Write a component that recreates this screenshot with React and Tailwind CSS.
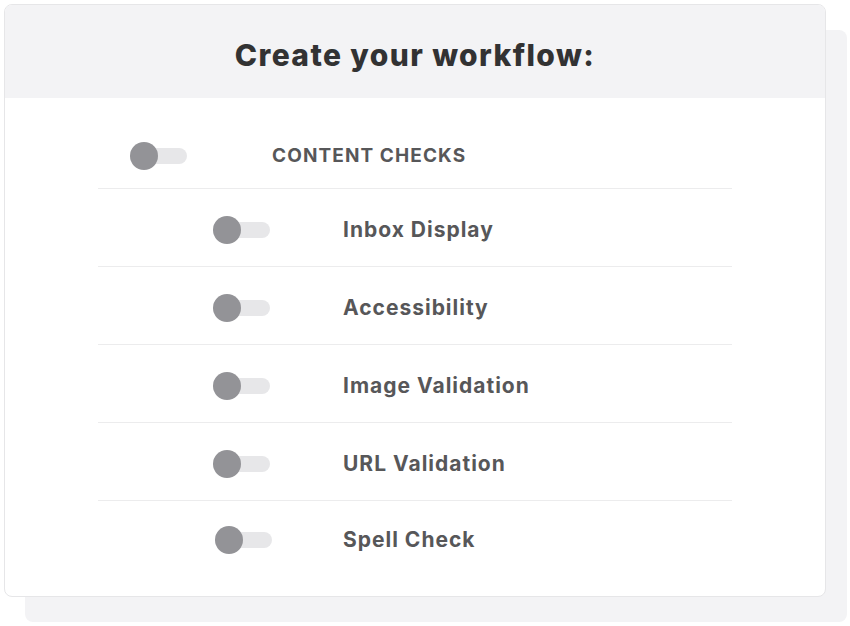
import React, { useState } from 'react';

const Toggle = ({ on, onClick, className = '' }) => (
    <button onClick={onClick} className={`relative flex items-center w-[57px] h-[28px] shrink-0 ${className}`}>
        <span className={`absolute left-[2px] right-0 h-[16px] rounded-full ${on ? 'bg-[#c9d8f5]' : 'bg-[#e7e7e9]'}`} />
        <span className={`absolute top-0 w-[28px] h-[28px] rounded-full transition-all ${on ? 'left-[29px] bg-[#3b6fd8]' : 'left-0 bg-[#939397]'}`} />
    </button>
);

const checks = ['Inbox Display', 'Accessibility', 'Image Validation', 'URL Validation', 'Spell Check'];

export default function App() {
    const [master, setMaster] = useState(false);
    const [state, setState] = useState({});

    return (
        <div className="relative w-[850px] h-[626px] bg-white pt-[4px] pl-[4px]" style={{ fontFamily: 'Inter, "Noto Sans", sans-serif' }}>
            {/* back card */}
            <div className="absolute left-[25px] top-[30px] w-[822px] h-[592px] rounded-[8px] bg-[#f3f3f5]" />

            <div className="relative w-[822px] h-[593px] rounded-[8px] border border-[#e6e6e8] bg-white overflow-hidden flex flex-col">
                <div className="h-[93px] bg-[#f3f3f5] flex items-center justify-center">
                    <h1 className="text-[30px] font-extrabold text-[#323233] tracking-[1.4px] pt-[8px]">Create your workflow:</h1>
                </div>

                <div className="w-[634px] mx-auto pt-[13px] flex flex-col">
                    <div className="h-[78px] pt-[13px] flex items-center border-b border-[#ececed]">
                        <Toggle on={master} onClick={() => setMaster(!master)} className="ml-[32px]" />
                        <span className="ml-[85px] text-[19px] font-bold text-[#575759] uppercase tracking-[1.1px]">Content Checks</span>
                    </div>
                    {checks.map((c, i) => {
                        const last = i === checks.length - 1;
                        return (
                            <div key={c} className={`flex items-center ${last ? 'h-[70px] pt-[8px]' : 'h-[78px] pt-[5px] border-b border-[#ececed]'}`}>
                                <Toggle
                                    on={!!state[c]}
                                    onClick={() => setState({ ...state, [c]: !state[c] })}
                                    className={last ? 'ml-[117px]' : 'ml-[115px]'}
                                />
                                <span className={`${last ? 'ml-[71px]' : 'ml-[73px]'} text-[21px] font-bold text-[#575759] tracking-[1px]`}>{c}</span>
                            </div>
                        );
                    })}
                </div>
            </div>
        </div>
    );
}
